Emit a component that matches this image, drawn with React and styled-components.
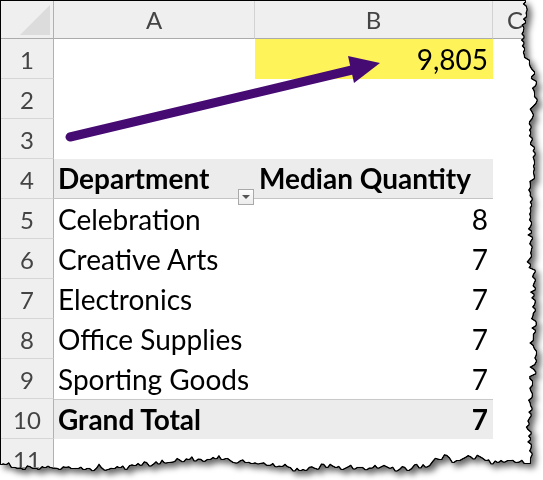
import React from 'react';
import styled, { createGlobalStyle } from 'styled-components';

const GlobalStyle = createGlobalStyle`
  html, body {
    margin: 0;
    padding: 0;
    background: #fff;
  }
  body {
    width: 543px;
    height: 480px;
    overflow: hidden;
    font-family: Lato, "Liberation Sans", sans-serif;
  }
`;

// torn paper edge along the right and bottom, seeded so it never changes
const tornEdge = (() => {
    let seed = 11;
    const rnd = () => {
        seed = (seed * 16807) % 2147483647;
        return seed / 2147483647;
    };
    let off = 0;
    const jag = () => {
        off += (rnd() - 0.5) * 5;
        off = Math.max(-6, Math.min(6, off));
        return off + (rnd() - 0.5) * 5;
    };
    const pts = ['0px 0px'];
    for (let y = 0; y <= 462; y += 3) pts.push(`${(527 + jag()).toFixed(1)}px ${y}px`);
    off = 0;
    for (let x = 524; x >= 0; x -= 3) pts.push(`${x}px ${(461 + jag()).toFixed(1)}px`);
    pts.push('0px 463px');
    return `polygon(${pts.join(', ')})`;
})();

const rows = [
    { a: '', b: '9,805', highlight: true },
    { a: '', b: '' },
    { a: '', b: '' },
    { a: 'Department', b: 'Median Quantity', header: true },
    { a: 'Celebration', b: '8' },
    { a: 'Creative Arts', b: '7' },
    { a: 'Electronics', b: '7' },
    { a: 'Office Supplies', b: '7' },
    { a: 'Sporting Goods', b: '7' },
    { a: 'Grand Total', b: '7', total: true },
    { a: '', b: '' },
];

const App = () => {
    return (
        <>
            <GlobalStyle />
            <Frame>
                <Sheet>
                    <Corner><CornerMark /></Corner>
                    <ColHead>A</ColHead>
                    <ColHead>B</ColHead>
                    <ColHead $last>C</ColHead>
                    {rows.map((r, i) => (
                        <React.Fragment key={i}>
                            <RowHead>{i + 1}</RowHead>
                            <Cell
                                $fill={r.header || r.total}
                                $bold={r.header || r.total}
                                $bottomLine={r.header}
                                $topLine={r.total}
                            >
                                {r.a}
                                {r.header && <FilterButton><span /></FilterButton>}
                            </Cell>
                            <Cell
                                $fill={r.header || r.total}
                                $yellow={r.highlight}
                                $bold={r.header || r.total}
                                $bottomLine={r.header}
                                $topLine={r.total}
                                $right={!r.header}
                            >
                                {r.b}
                            </Cell>
                            <Cell />
                        </React.Fragment>
                    ))}
                    <Arrow viewBox="0 0 542 479" width="542" height="479">
                        <line x1="69" y1="136" x2="351" y2="69" stroke="#460b73" strokeWidth="9" strokeLinecap="round" />
                        <polygon points="379,62 347,55 353,82" fill="#460b73" />
                    </Arrow>
                </Sheet>
            </Frame>
        </>
    );
};

const Frame = styled.div`
    width: 542px;
    height: 479px;
    padding: 1px 0 0 1px;
    filter: drop-shadow(1px 0 0 #000) drop-shadow(-1px 0 0 #000) drop-shadow(0 1px 0 #000) drop-shadow(0 -1px 0 #000) drop-shadow(4px 4px 3px rgba(0, 0, 0, 0.6));
`;

const Sheet = styled.div`
    position: relative;
    width: 542px;
    height: 479px;
    overflow: hidden;
    background: #fff;
    clip-path: ${tornEdge};
    display: grid;
    grid-template-columns: 53px 201px 238px 44px;
    grid-template-rows: 38px repeat(11, 40px);
    align-content: start;
`;

const Corner = styled.div`
    box-sizing: border-box;
    background: #efefef;
    border-right: 1px solid #b1b1b1;
    border-bottom: 1px solid #ababab;
    display: flex;
    align-items: flex-end;
    justify-content: flex-end;
    padding: 0 3px 3px 0;
`;

const CornerMark = styled.div`
    width: 30px;
    height: 30px;
    background: #dcdcdc;
    clip-path: polygon(100% 0, 100% 100%, 0 100%);
`;

const ColHead = styled.div`
    box-sizing: border-box;
    background: #efefef;
    border-right: ${p => (p.$last ? 'none' : '1px solid #d2d2d2')};
    border-bottom: 1px solid #ababab;
    color: #444;
    font-size: 24px;
    line-height: 38px;
    text-align: center;
`;

const RowHead = styled.div`
    box-sizing: border-box;
    background: #efefef;
    border-right: 1px solid #b1b1b1;
    border-bottom: 1px solid #d6d6d6;
    color: #444;
    font-size: 24px;
    line-height: 40px;
    padding-top: 1px;
    text-align: center;
`;

const Cell = styled.div`
    position: relative;
    box-sizing: border-box;
    background: ${p => (p.$yellow ? '#fff35a' : p.$fill ? '#ececec' : '#fff')};
    border-top: ${p => (p.$topLine ? '1px solid #c9c9c9' : 'none')};
    border-bottom: ${p => (p.$bottomLine ? '1px solid #c4c4c4' : 'none')};
    color: #000;
    font-size: 28px;
    font-weight: ${p => (p.$bold ? 700 : 400)};
    line-height: ${p => (p.$topLine || p.$bottomLine ? '39px' : '40px')};
    padding: 0 5px 0 4px;
    text-align: ${p => (p.$right ? 'right' : 'left')};
    white-space: nowrap;
`;

const FilterButton = styled.div`
    position: absolute;
    right: 1px;
    top: 30px;
    width: 16px;
    height: 16px;
    box-sizing: border-box;
    border: 1px solid #a9a9a9;
    background: linear-gradient(#fdfdfd, #ececec);
    display: flex;
    align-items: center;
    justify-content: center;
    z-index: 1;

    span {
        width: 0;
        height: 0;
        border-left: 4px solid transparent;
        border-right: 4px solid transparent;
        border-top: 4px solid #555;
    }
`;

const Arrow = styled.svg`
    position: absolute;
    left: 0;
    top: 0;
    pointer-events: none;
`;

export default App;
